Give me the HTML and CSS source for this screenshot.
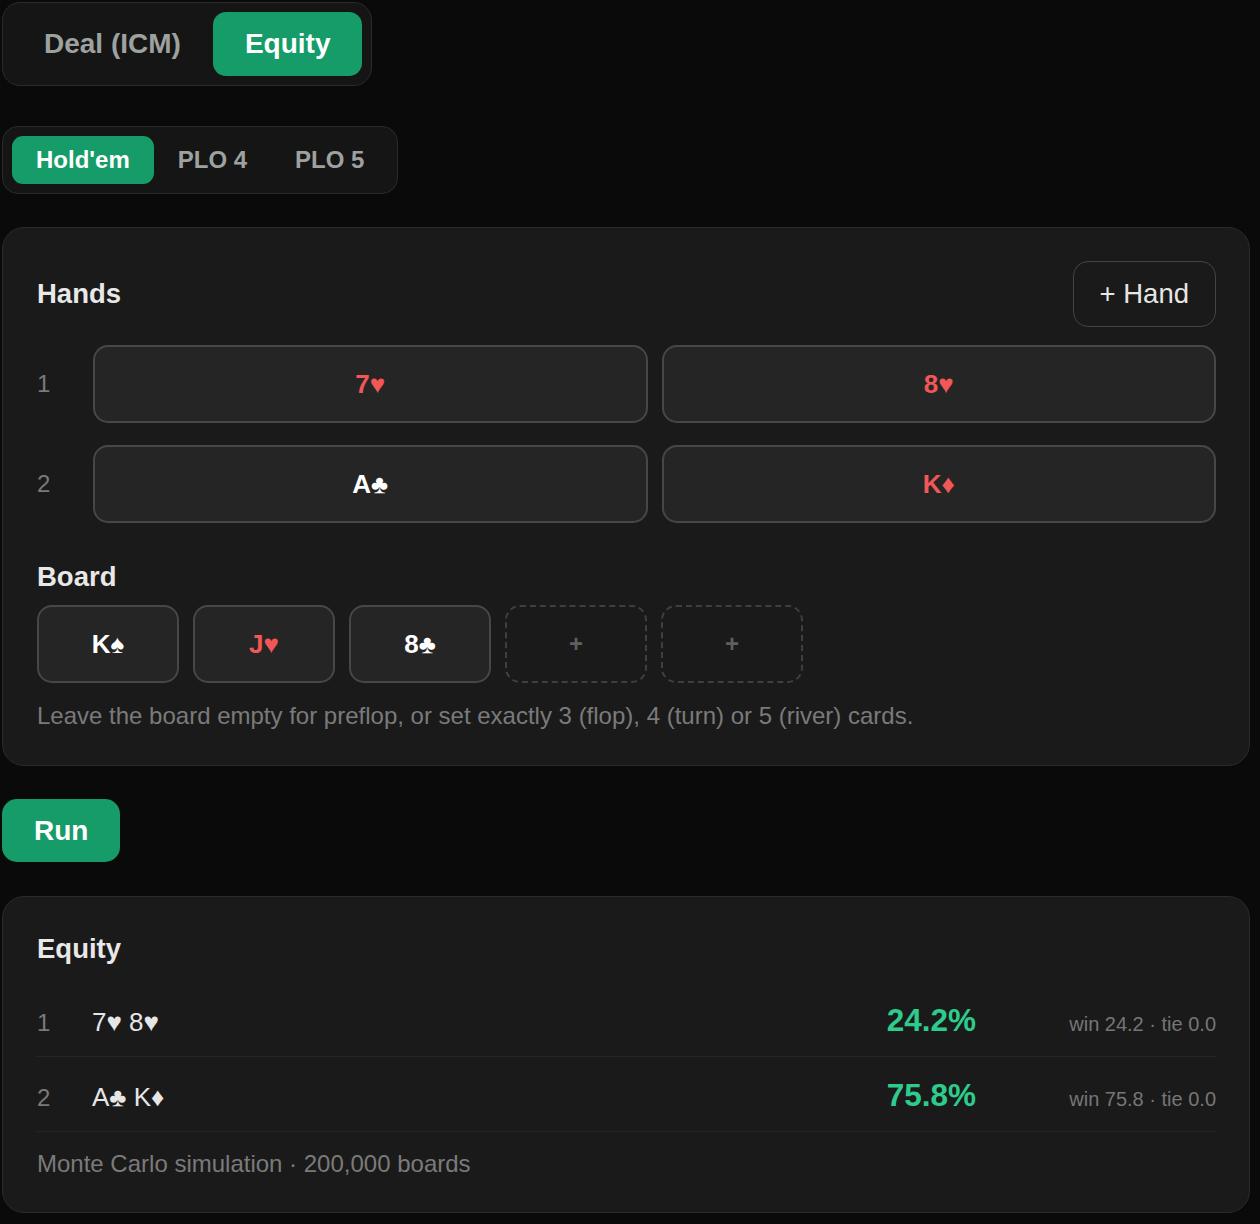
FILE: index.html
```html
<!DOCTYPE html>
<html lang="en">
<head>
<meta charset="utf-8">
<title>Equity</title>
<link rel="stylesheet" href="styles.css">
</head>
<body>
<div class="page">
  <div class="seg seg-lg">
    <button class="seg-btn">Deal (ICM)</button>
    <button class="seg-btn active">Equity</button>
  </div>

  <div class="seg seg-sm">
    <button class="seg-btn active">Hold'em</button>
    <button class="seg-btn">PLO 4</button>
    <button class="seg-btn">PLO 5</button>
  </div>

  <section class="card">
    <div class="card-head">
      <h2 class="title">Hands</h2>
      <button class="add-btn">+ Hand</button>
    </div>
    <div class="hands">
      <div class="hand-row">
        <span class="idx">1</span>
        <button class="slot red">7♥</button>
        <button class="slot red">8♥</button>
      </div>
      <div class="hand-row">
        <span class="idx">2</span>
        <button class="slot">A♣</button>
        <button class="slot red">K♦</button>
      </div>
    </div>
    <h2 class="title board-title">Board</h2>
    <div class="board">
      <button class="slot bcard">K♠</button>
      <button class="slot bcard red">J♥</button>
      <button class="slot bcard">8♣</button>
      <button class="slot bcard empty">+</button>
      <button class="slot bcard empty">+</button>
    </div>
    <p class="hint">Leave the board empty for preflop, or set exactly 3 (flop), 4 (turn) or 5 (river) cards.</p>
  </section>

  <button class="run">Run</button>

  <section class="card results">
    <h2 class="title">Equity</h2>
    <div class="res-row">
      <span class="idx">1</span>
      <span class="res-hand">7♥ 8♥</span>
      <span class="pct">24.2%</span>
      <span class="detail">win 24.2 · tie 0.0</span>
    </div>
    <div class="res-row">
      <span class="idx">2</span>
      <span class="res-hand">A♣ K♦</span>
      <span class="pct">75.8%</span>
      <span class="detail">win 75.8 · tie 0.0</span>
    </div>
    <p class="foot">Monte Carlo simulation · 200,000 boards</p>
  </section>
</div>
</body>
</html>
```

FILE: styles.css
```css
* { box-sizing: border-box; }

html, body {
  margin: 0;
  padding: 0;
  background: #0a0a0a;
}

body {
  font-family: "Liberation Sans", Arial, sans-serif;
  color: #e6e6e6;
}

.page {
  width: 1248px;
  margin-left: 2px;
  padding-top: 2px;
  display: flex;
  flex-direction: column;
  align-items: flex-start;
}

button {
  font-family: inherit;
  cursor: pointer;
}

/* segmented controls */
.seg {
  display: inline-flex;
  background: #151515;
  border: 1px solid #2a2a2a;
  padding: 9px;
}

.seg-btn {
  border: none;
  background: transparent;
  color: #9ea29f;
  font-weight: 700;
}

.seg-btn.active {
  background: #169c69;
  color: #ffffff;
}

.seg-lg {
  border-radius: 18px;
}
.seg-lg .seg-btn {
  height: 64px;
  padding: 0 32px;
  font-size: 28px;
  border-radius: 13px;
}

.seg-sm {
  margin-top: 40px;
  border-radius: 16px;
}
.seg-sm .seg-btn {
  height: 48px;
  padding: 0 24px;
  font-size: 24px;
  border-radius: 11px;
}

/* cards */
.card {
  align-self: stretch;
  background: #1a1a1a;
  border: 1px solid #2b2b2b;
  border-radius: 22px;
  padding: 33px 33px 33px 34px;
  margin-top: 33px;
}

.card-head {
  display: flex;
  justify-content: space-between;
  align-items: center;
}

.title {
  margin: 0;
  font-size: 27.5px;
  line-height: 38px;
  font-weight: 700;
  color: #e8e8e8;
}

.add-btn {
  height: 66px;
  padding: 0 26px;
  background: #1a1a1a;
  border: 1.5px solid #444;
  border-radius: 15px;
  color: #e6e6e6;
  font-size: 27.5px;
}

.hands {
  margin-top: 18px;
  display: flex;
  flex-direction: column;
  gap: 22px;
}

.hand-row {
  display: grid;
  grid-template-columns: 42px 1fr 1fr;
  column-gap: 14px;
  align-items: center;
}

.idx {
  color: #7a7a7a;
  font-size: 24px;
}

.slot {
  height: 78px;
  background: #252525;
  border: 2px solid #474747;
  border-radius: 15px;
  color: #ffffff;
  font-size: 26px;
  font-weight: 700;
}

.slot.red {
  color: #f25757;
}

.board-title {
  margin-top: 35px;
}

.board {
  margin-top: 9px;
  display: flex;
  gap: 14px;
}

.bcard {
  width: 142px;
}

.slot.empty {
  background: transparent;
  border: 2px dashed #3f3f3f;
  color: #5f5f5f;
  font-size: 24px;
}

.hint {
  margin: 17px 0 0;
  font-size: 24px;
  line-height: 32px;
  color: #7a7a7a;
}

.run {
  margin-top: 33px;
  height: 63px;
  padding: 0 32px;
  border: none;
  border-radius: 15px;
  background: #169c69;
  color: #ffffff;
  font-size: 28px;
  font-weight: 700;
}

.results {
  margin-top: 34px;
  padding-bottom: 32px;
}

.results .title {
  margin-bottom: 14px;
}

.res-row {
  display: grid;
  grid-template-columns: 55px 1fr auto 240px;
  align-items: baseline;
  height: 75px;
  padding-top: 20px;
  border-bottom: 1px solid #262626;
}

.res-hand {
  font-size: 26px;
  color: #e6e6e6;
}

.pct {
  font-size: 31.5px;
  font-weight: 700;
  color: #2ecc8c;
}

.detail {
  text-align: right;
  font-size: 20px;
  color: #767676;
}

.foot {
  margin: 16px 0 0;
  font-size: 24px;
  line-height: 32px;
  color: #7a7a7a;
}
```
